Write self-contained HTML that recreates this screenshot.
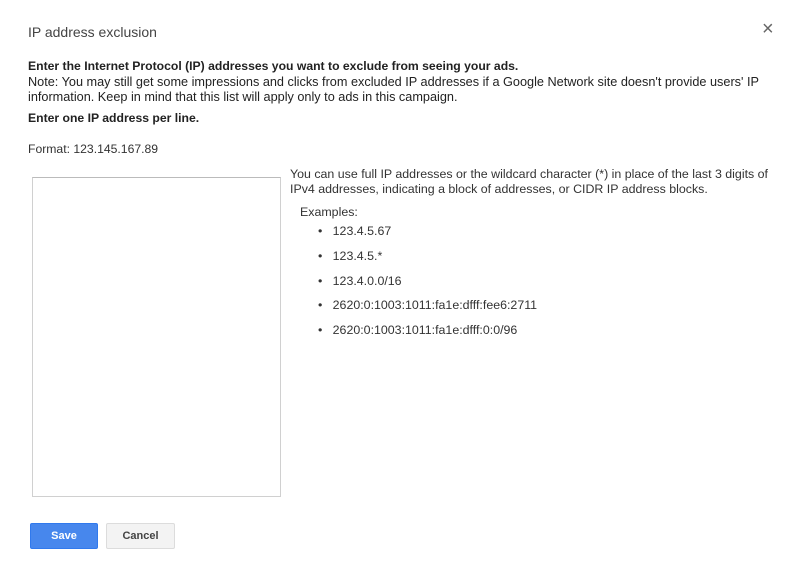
<!DOCTYPE html>
<html><head><style>
body{margin:0;width:800px;height:577px;background:#fff;font-family:"Liberation Sans",Arial,sans-serif;color:#222;position:relative;overflow:hidden}
.a{position:absolute;white-space:nowrap}
</style></head><body>
<div class="a" style="left:28px;top:24px;font-size:14px;color:#444">IP address exclusion</div>
<div class="a" style="left:762px;top:18px;font-size:20px;color:#666">×</div>
<div class="a" style="left:28px;top:59px;font-size:12.2px;font-weight:bold;color:#222">Enter the Internet Protocol (IP) addresses you want to exclude from seeing your ads.</div>
<div class="a" style="left:28px;top:75px;font-size:12.7px;line-height:15px;color:#222">Note: You may still get some impressions and clicks from excluded IP addresses if a Google Network site doesn't provide users' IP<br>information. Keep in mind that this list will apply only to ads in this campaign.</div>
<div class="a" style="left:28px;top:111px;font-size:12.2px;font-weight:bold">Enter one IP address per line.</div>
<div class="a" style="left:28px;top:142px;font-size:12.2px;color:#333">Format: 123.145.167.89</div>
<div class="a" style="left:32px;top:177px;width:247px;height:318px;border:1px solid #d0d0d0;border-top-color:#bbb"></div>
<div class="a" style="left:290px;top:167px;font-size:12.4px;line-height:15px;color:#333">You can use full IP addresses or the wildcard character (*) in place of the last 3 digits of<br>IPv4 addresses, indicating a block of addresses, or CIDR IP address blocks.</div>
<div class="a" style="left:300px;top:205px;font-size:12.4px;color:#333">Examples:</div>
<div class="a" style="left:318px;top:219px;font-size:12.4px;color:#333;line-height:24.8px">•&nbsp;&nbsp; 123.4.5.67<br>•&nbsp;&nbsp; 123.4.5.*<br>•&nbsp;&nbsp; 123.4.0.0/16<br>•&nbsp;&nbsp; 2620:0:1003:1011:fa1e:dfff:fee6:2711<br>•&nbsp;&nbsp; 2620:0:1003:1011:fa1e:dfff:0:0/96</div>
<div class="a" style="left:30px;top:523px;width:68px;height:26px;background:#4787ed;border:1px solid #3079ed;border-radius:2px;color:#fff;font-size:11px;font-weight:bold;text-align:center;line-height:24px;box-sizing:border-box">Save</div>
<div class="a" style="left:106px;top:523px;width:69px;height:26px;background:#f3f3f3;border:1px solid #dcdcdc;border-radius:2px;color:#444;font-size:11px;font-weight:bold;text-align:center;line-height:24px;box-sizing:border-box">Cancel</div>
</body></html>
